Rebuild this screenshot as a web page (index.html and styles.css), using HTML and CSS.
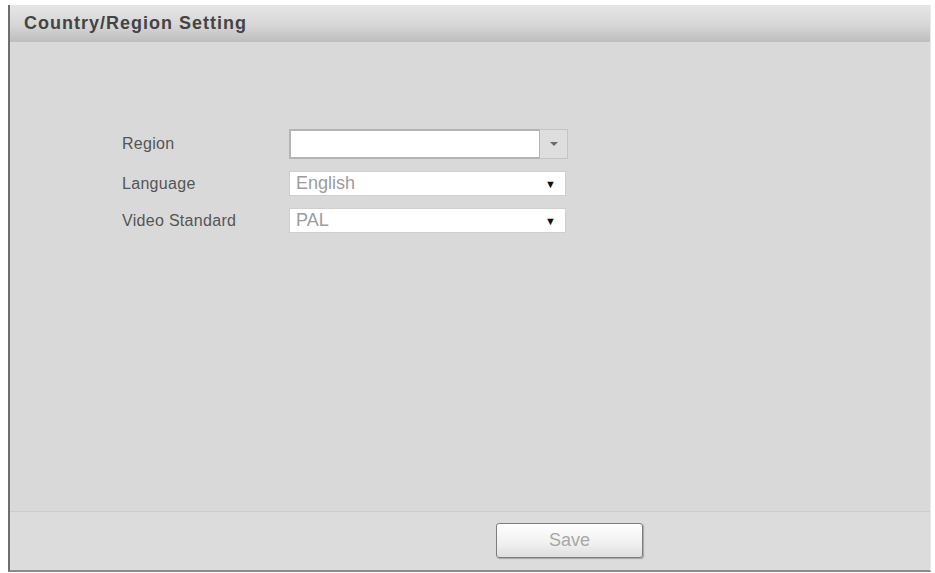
FILE: index.html
```html
<!DOCTYPE html>
<html lang="en">
<head>
    <meta charset="UTF-8">
    <meta name="viewport" content="width=device-width, initial-scale=1.0">
    <title>Country/Region Setting</title>
    <link rel="stylesheet" href="styles.css">
</head>
<body>
    <div class="panel">
        <div class="panel-header">Country/Region Setting</div>

        <div class="panel-body">
            <div class="form-row">
                <label class="form-label">Region</label>
                <div class="combo">
                    <input class="combo-input" type="text" value="">
                    <span class="combo-btn"><span class="combo-arrow"></span></span>
                </div>
            </div>
            <div class="form-row">
                <label class="form-label">Language</label>
                <div class="select-box">
                    <span class="select-value">English</span>
                    <span class="select-arrow">&#9660;</span>
                </div>
            </div>
            <div class="form-row">
                <label class="form-label">Video Standard</label>
                <div class="select-box">
                    <span class="select-value">PAL</span>
                    <span class="select-arrow">&#9660;</span>
                </div>
            </div>
        </div>

        <div class="panel-footer">
            <button class="btn-save">Save</button>
        </div>
    </div>
</body>
</html>
```

FILE: styles.css
```css
body {
    margin: 0;
    padding: 0;
    background-color: #ffffff;
    font-family: "Liberation Sans", Arial, sans-serif;
}
.panel {
    margin: 5px 4px 0 8px;
    height: 565px;
    display: flex;
    flex-direction: column;
    background-color: #d9d9d9;
    border-left: 2px solid #6e6e6e;
    border-bottom: 2px solid #8a8a8a;
    border-right: 1px solid #e8e8e8;
}
.panel-header {
    height: 37px;
    line-height: 37px;
    padding-left: 14px;
    font-size: 18px;
    font-weight: bold;
    letter-spacing: 1px;
    color: #444444;
    background: linear-gradient(to bottom, #e6e6e6 0%, #d6d6d6 55%, #bdbdbd 100%);
}
.panel-body {
    flex: 1;
    padding: 87px 0 0 112px;
    display: flex;
    flex-direction: column;
    gap: 12px;
}
.form-row {
    display: flex;
    align-items: center;
}
.form-label {
    width: 167px;
    font-size: 16px;
    letter-spacing: 0.3px;
    color: #555555;
}
.combo {
    display: flex;
    height: 30px;
}
.combo-input {
    box-sizing: border-box;
    width: 251px;
    height: 30px;
    margin: 0;
    border: 2px solid #b4b4b4;
    border-right-width: 1px;
    background: #ffffff;
    outline: none;
}
.combo-btn {
    box-sizing: border-box;
    width: 28px;
    height: 30px;
    display: flex;
    align-items: center;
    justify-content: center;
    background: #dedede;
    border: 1px solid #c4c4c4;
    border-left: none;
}
.combo-arrow {
    width: 0;
    height: 0;
    border-left: 4px solid transparent;
    border-right: 4px solid transparent;
    border-top: 4px solid #6a6a6a;
}
.select-box {
    box-sizing: border-box;
    width: 277px;
    height: 25px;
    display: flex;
    align-items: center;
    justify-content: space-between;
    padding: 0 9px 0 6px;
    background: #ffffff;
    border: 1px solid #cfcfcf;
}
.select-value {
    font-size: 18px;
    color: #9c9c9c;
}
.select-arrow {
    font-size: 11px;
    color: #111111;
}
.panel-footer {
    height: 59px;
    box-sizing: border-box;
    padding: 11px 0 0 486px;
    background-color: #dcdcdc;
    border-top: 1px solid #cdcdcd;
}
.btn-save {
    width: 147px;
    height: 35px;
    font-family: "Liberation Sans", Arial, sans-serif;
    font-size: 18px;
    color: #a8a8a8;
    background: linear-gradient(to bottom, #ffffff 0%, #f0f0f0 60%, #dedede 100%);
    border: 1px solid #7d7d7d;
    border-radius: 3px;
    box-shadow: 1px 1px 1px rgba(0, 0, 0, 0.25);
    cursor: pointer;
}
```
